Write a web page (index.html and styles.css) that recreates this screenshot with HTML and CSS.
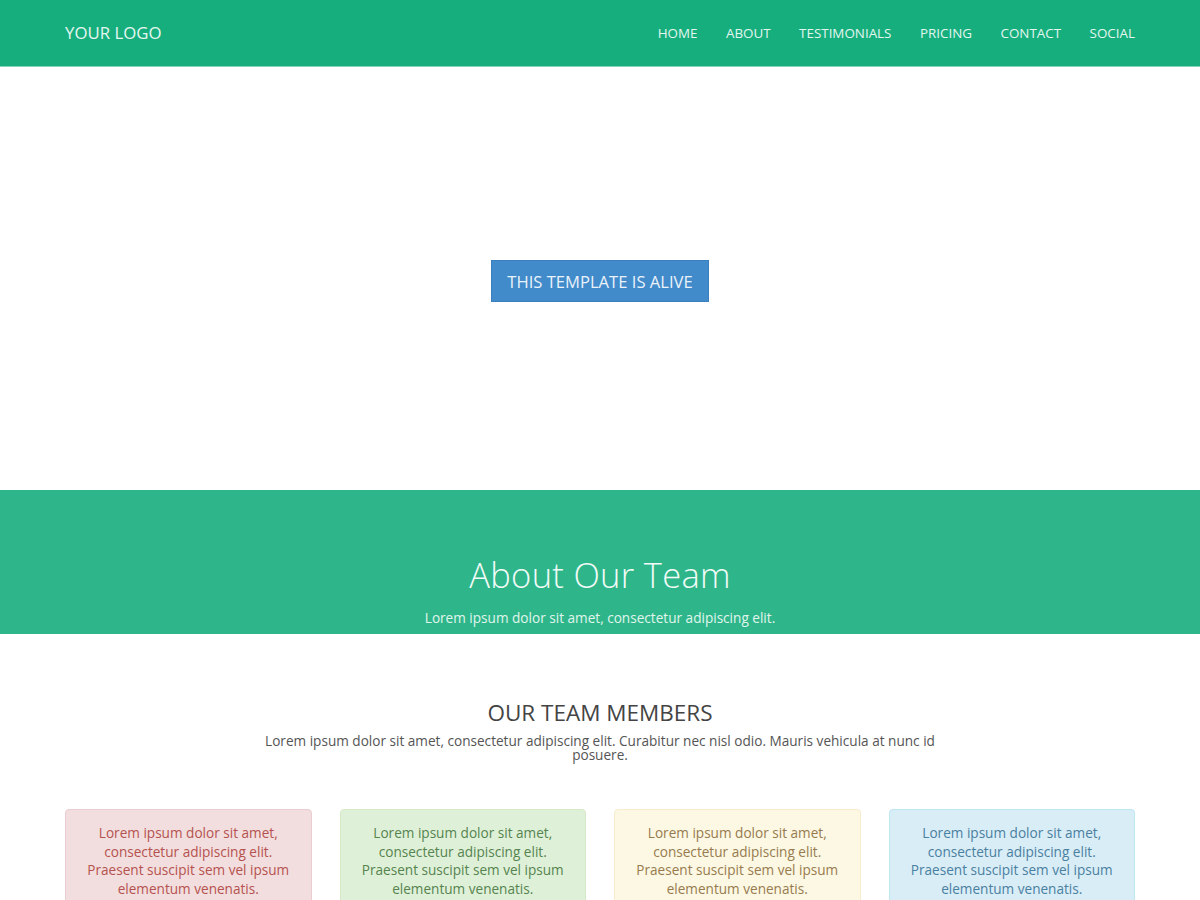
FILE: index.html
```html
<!DOCTYPE html>
<html lang="en">
<head>
<meta charset="utf-8">
<title>Template</title>
<link rel="stylesheet" href="styles.css">
</head>
<body>
<header class="topbar">
  <div class="container topbar-inner">
    <a class="logo" href="#">YOUR LOGO</a>
    <nav class="nav">
      <a href="#">HOME</a>
      <a href="#">ABOUT</a>
      <a href="#">TESTIMONIALS</a>
      <a href="#">PRICING</a>
      <a href="#">CONTACT</a>
      <a href="#">SOCIAL</a>
    </nav>
  </div>
</header>
<section class="hero">
  <a class="btn-alive" href="#">THIS TEMPLATE IS ALIVE</a>
</section>
<section class="about">
  <h2 class="about-title">About Our Team</h2>
  <p class="about-sub">Lorem ipsum dolor sit amet, consectetur adipiscing elit.</p>
</section>
<section class="team">
  <div class="container">
    <h3 class="team-title">OUR TEAM MEMBERS</h3>
    <p class="team-lead">Lorem ipsum dolor sit amet, consectetur adipiscing elit. Curabitur nec nisl odio. Mauris vehicula at nunc id posuere.</p>
    <div class="cards">
      <div class="card card-danger">Lorem ipsum dolor sit amet, consectetur adipiscing elit. Praesent suscipit sem vel ipsum elementum venenatis.</div>
      <div class="card card-success">Lorem ipsum dolor sit amet, consectetur adipiscing elit. Praesent suscipit sem vel ipsum elementum venenatis.</div>
      <div class="card card-warning">Lorem ipsum dolor sit amet, consectetur adipiscing elit. Praesent suscipit sem vel ipsum elementum venenatis.</div>
      <div class="card card-info">Lorem ipsum dolor sit amet, consectetur adipiscing elit. Praesent suscipit sem vel ipsum elementum venenatis.</div>
    </div>
  </div>
</section>
</body>
</html>
```
FILE: styles.css
```css
* { box-sizing: border-box; }
html, body { margin: 0; padding: 0; }
body {
  font-family: "Open Sans", "Liberation Sans", sans-serif;
  font-size: 13.6px;
  color: #444;
  background: #fff;
}
a { text-decoration: none; }
.container {
  width: 1070px;
  margin: 0 auto;
}
.topbar {
  background: #17ae7e;
  height: 67px;
  border-bottom: 1px solid #7fd6b8;
}
.topbar-inner {
  height: 65px;
  display: flex;
  align-items: center;
  justify-content: space-between;
}
.logo {
  color: #e6f7f0;
  font-size: 16.8px;
}
.nav {
  display: flex;
  gap: 28.5px;
}
.nav a {
  color: #e3f6ef;
  font-size: 13.4px;
}
.hero {
  height: 423px;
  display: flex;
  align-items: center;
  justify-content: center;
  padding-top: 4px;
}
.btn-alive {
  display: inline-block;
  background: #428bca;
  color: #eaf2fa;
  font-size: 16.6px;
  padding: 0 15px;
  height: 42px;
  line-height: 41px;
  border: 1px solid #3b7fbd;
}
.about {
  background: #2eb68a;
  text-align: center;
  padding: 65px 0 0;
  height: 144px;
}
.about-title {
  margin: 0;
  font-size: 34.5px;
  font-weight: 300;
  color: #f2fbf7;
  line-height: 40px;
  letter-spacing: 0.3px;
}
.about-sub {
  margin: 13px 0 0;
  color: #e0f5ec;
  font-size: 13.6px;
  line-height: 20px;
}
.team {
  padding-top: 66px;
  text-align: center;
}
.team-title {
  margin: 0;
  font-size: 22.5px;
  font-weight: 400;
  line-height: 26px;
  color: #444;
}
.team-lead {
  margin: 8px auto 0;
  width: 680px;
  font-size: 13.6px;
  line-height: 14px;
  color: #555;
}
.cards {
  margin-top: 47px;
  display: grid;
  grid-template-columns: repeat(4, 1fr);
  gap: 28px;
}
.card {
  border: 1px solid;
  border-radius: 4px;
  padding: 14px 18px;
  font-size: 13.6px;
  line-height: 18.7px;
  min-height: 120px;
}
.card-danger { background: #f2dede; border-color: #ebccd1; color: #b5524f; }
.card-success { background: #dff0d8; border-color: #d6e9c6; color: #55844f; }
.card-warning { background: #fcf8e3; border-color: #faebcc; color: #977b4f; }
.card-info { background: #d9edf7; border-color: #bce8f1; color: #4a80a0; }
```
